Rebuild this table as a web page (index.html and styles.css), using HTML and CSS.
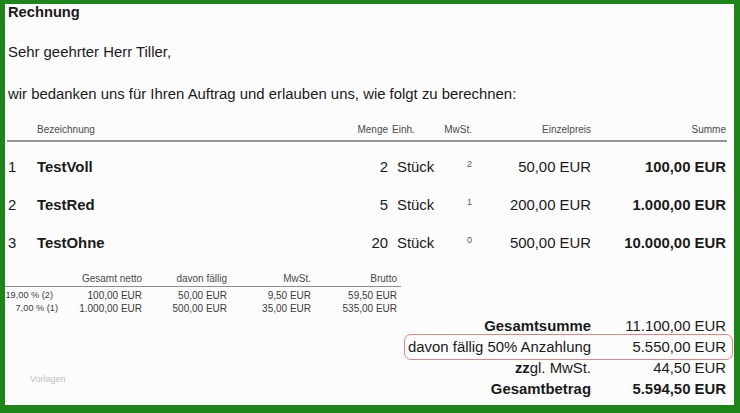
FILE: index.html
```html
<!DOCTYPE html>
<html lang="de">
<head>
<meta charset="utf-8">
<title>Rechnung</title>
<link rel="stylesheet" href="styles.css">
</head>
<body>
<div class="frame">
  <h1 class="title">Rechnung</h1>
  <p class="salutation">Sehr geehrter Herr Tiller,</p>
  <p class="intro">wir bedanken uns für Ihren Auftrag und erlauben uns, wie folgt zu berechnen:</p>

  <div class="items">
    <div class="irow ihead">
      <span></span>
      <span class="c-name">Bezeichnung</span>
      <span class="r">Menge</span>
      <span class="c-unit-h">Einh.</span>
      <span class="r">MwSt.</span>
      <span class="r">Einzelpreis</span>
      <span class="r">Summe</span>
    </div>
    <div class="irow">
      <span class="c-pos">1</span>
      <span class="c-name b">TestVoll</span>
      <span class="r">2</span>
      <span class="c-unit">Stück</span>
      <span class="r"><span class="tax">2</span></span>
      <span class="r">50,00 EUR</span>
      <span class="r b">100,00 EUR</span>
    </div>
    <div class="irow">
      <span class="c-pos">2</span>
      <span class="c-name b">TestRed</span>
      <span class="r">5</span>
      <span class="c-unit">Stück</span>
      <span class="r"><span class="tax">1</span></span>
      <span class="r">200,00 EUR</span>
      <span class="r b">1.000,00 EUR</span>
    </div>
    <div class="irow">
      <span class="c-pos">3</span>
      <span class="c-name b">TestOhne</span>
      <span class="r">20</span>
      <span class="c-unit">Stück</span>
      <span class="r"><span class="tax">0</span></span>
      <span class="r">500,00 EUR</span>
      <span class="r b">10.000,00 EUR</span>
    </div>
  </div>

  <div class="taxes">
    <div class="trow thead">
      <span></span>
      <span>Gesamt netto</span>
      <span>davon fällig</span>
      <span>MwSt.</span>
      <span>Brutto</span>
    </div>
    <div class="trow first">
      <span class="rate rate-a">19,00 % (2)</span>
      <span>100,00 EUR</span>
      <span>50,00 EUR</span>
      <span>9,50 EUR</span>
      <span>59,50 EUR</span>
    </div>
    <div class="trow">
      <span class="rate">7,00 % (1)</span>
      <span>1.000,00 EUR</span>
      <span>500,00 EUR</span>
      <span>35,00 EUR</span>
      <span>535,00 EUR</span>
    </div>
  </div>

  <div class="bottom">
    <div class="mark">Vorlagen</div>
    <div class="totals">
      <div class="tot">
        <span class="lbl b">Gesamtsumme</span>
        <span class="val">11.100,00 EUR</span>
      </div>
      <div class="tot hl">
        <span class="lbl">davon fällig 50% Anzahlung</span>
        <span class="val">5.550,00 EUR</span>
      </div>
      <div class="tot">
        <span class="lbl"><b>zz</b>gl. MwSt.</span>
        <span class="val">44,50 EUR</span>
      </div>
      <div class="tot">
        <span class="lbl b">Gesamtbetrag</span>
        <span class="val b">5.594,50 EUR</span>
      </div>
    </div>
  </div>
</div>
</body>
</html>
```

FILE: styles.css
```css
* { box-sizing: border-box; }

html, body {
  margin: 0;
  padding: 0;
  background: #fcfcfc;
}

.frame {
  width: 740px;
  height: 413px;
  overflow: hidden;
  border-style: solid;
  border-color: #1d8519;
  border-width: 4px 6px 8px 5px;
  background: #fcfcfc;
  font-family: "Liberation Sans", Arial, sans-serif;
  color: #1a1a1a;
  font-size: 14.9px;
}

.title {
  margin: 0;
  padding-left: 3px;
  font-size: 14.7px;
  font-weight: bold;
  line-height: 16px;
}

.salutation,
.intro {
  margin: 23px 0 0;
  padding-left: 3px;
  line-height: 18px;
}

.intro { margin-top: 24px; }

.b { font-weight: bold; }
.r { text-align: right; }

/* items table */
.items {
  margin: 21px 0 0 2px;
  width: 720px;
}

.irow {
  display: grid;
  grid-template-columns: 30px 301px 50px 56px 28px 119px 135px;
  height: 38px;
  line-height: 38px;
  white-space: nowrap;
}

.ihead {
  height: auto;
  font-size: 10px;
  line-height: 12px;
  color: #4a4a4a;
  padding-bottom: 4px;
  border-bottom: 2px solid #959595;
  margin-bottom: 6px;
}

.c-pos { padding-left: 1px; }
.c-unit-h { padding-left: 4px; }
.c-unit { padding-left: 9px; }

.tax {
  font-size: 9px;
  line-height: 1;
  color: #555;
  vertical-align: 5px;
}

/* tax summary */
.taxes {
  margin-top: 11px;
  width: 396px;
  font-size: 10px;
  color: #3a3a3a;
}

.trow {
  display: grid;
  grid-template-columns: 53px 84px 85px 84px 86px;
  line-height: 13.5px;
  white-space: nowrap;
}

.trow span { text-align: right; }

.thead {
  line-height: 12px;
  padding-bottom: 1px;
  border-bottom: 1px solid #8f8f8f;
  color: #4a4a4a;
}

.trow.first { margin-top: 1.5px; }

.rate { font-size: 9.2px; }
.rate-a { padding-right: 5px; }

/* totals */
.bottom {
  display: flex;
  justify-content: space-between;
  margin-top: 0.5px;
  padding-right: 8px;
}

.mark {
  margin: 58px 0 0 25px;
  font-size: 9px;
  line-height: 11px;
  color: #bdbdbd;
}

.totals {
  display: flex;
  flex-direction: column;
  align-items: flex-end;
}

.tot {
  display: flex;
  line-height: 21px;
  white-space: nowrap;
}

.tot .val {
  width: 135px;
  text-align: right;
}

.tot.hl {
  border: 1px solid #de8686;
  border-radius: 7px;
  margin: -3px -7px -2px 0;
  padding: 2px 6px 1px 3px;
}
```
